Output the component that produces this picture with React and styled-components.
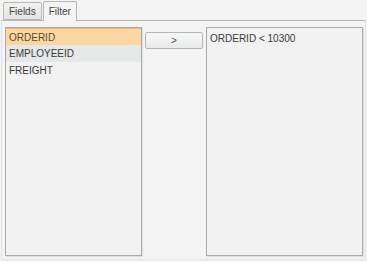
import React from "react";
import styled, { createGlobalStyle } from "styled-components";

const Global = createGlobalStyle`
  html, body { margin: 0; padding: 0; background: #f3f4f3; }
  body { font-family: "Liberation Sans", Arial, sans-serif; }
  #root { width: 367px; height: 262px; }
`;

const Wrap = styled.div`
  width: 367px;
  height: 262px;
  box-sizing: border-box;
  display: flex;
  flex-direction: column;
  padding: 1px 1px 2px 1px;
`;

const TabStrip = styled.div`
  display: flex;
  align-items: flex-end;
  height: 19px;
  padding-left: 2px;
  gap: 1px;
`;

const Tab = styled.div`
  box-sizing: border-box;
  height: ${(p) => (p.$active ? "20px" : "18px")};
  padding: 0 5px;
  display: flex;
  align-items: center;
  font-size: 10px;
  color: #444;
  border: 1px solid #b5b7b8;
  border-bottom: ${(p) => (p.$active ? "none" : "1px solid #b5b7b8")};
  border-radius: 2px 2px 0 0;
  background: ${(p) => (p.$active ? "#f4f5f4" : "linear-gradient(#f1f2f1, #e4e5e4)")};
  margin-bottom: ${(p) => (p.$active ? "-1px" : "0")};
  position: relative;
  z-index: ${(p) => (p.$active ? 1 : 0)};
`;

const Panel = styled.div`
  flex: 1;
  box-sizing: border-box;
  border: 1px solid #e2e4e3;
  border-top: 1px solid #b5b7b8;
  display: grid;
  grid-template-columns: 137px 58px 157px;
  column-gap: 3px;
  padding: 6px 4px 3px 3px;
  background: #f3f4f3;
`;

const Box = styled.div`
  box-sizing: border-box;
  border: 1px solid #a9abab;
  box-shadow: 1px 1px 0 #dcdedd;
  background: #f1f2f1;
  display: flex;
  flex-direction: column;
`;

const Row = styled.div`
  height: 17px;
  display: flex;
  align-items: center;
  padding-left: 3px;
  font-size: 10px;
  color: ${(p) => (p.$selected ? "#5a4a30" : "#3a3a3a")};
  background: ${(p) =>
    p.$selected ? "#fdd7a1" : p.$hover ? "#e6e7e7" : "transparent"};
  border-top: ${(p) => (p.$selected ? "1px solid #f3b86a" : "none")};
  box-sizing: border-box;
`;

const Middle = styled.div`
  padding-top: 5px;
`;

const Button = styled.div`
  box-sizing: border-box;
  height: 17px;
  border: 1px solid #b4b6b6;
  border-radius: 2px;
  background: linear-gradient(#f7f8f7, #e9eaea);
  display: flex;
  align-items: center;
  justify-content: center;
  font-size: 10px;
  color: #555;
`;

const FilterText = styled.div`
  padding: 5px 3px;
  font-size: 10px;
  color: #3a3a3a;
`;

const fields = ["ORDERID", "EMPLOYEEID", "FREIGHT"];

export default function App() {
  return (
    <>
      <Global />
      <Wrap>
        <TabStrip>
          <Tab>Fields</Tab>
          <Tab $active>Filter</Tab>
        </TabStrip>
        <Panel>
          <Box>
            {fields.map((f, i) => (
              <Row key={f} $selected={i === 0} $hover={i === 1}>
                {f}
              </Row>
            ))}
          </Box>
          <Middle>
            <Button>&gt;</Button>
          </Middle>
          <Box>
            <FilterText>ORDERID &lt; 10300</FilterText>
          </Box>
        </Panel>
      </Wrap>
    </>
  );
}
